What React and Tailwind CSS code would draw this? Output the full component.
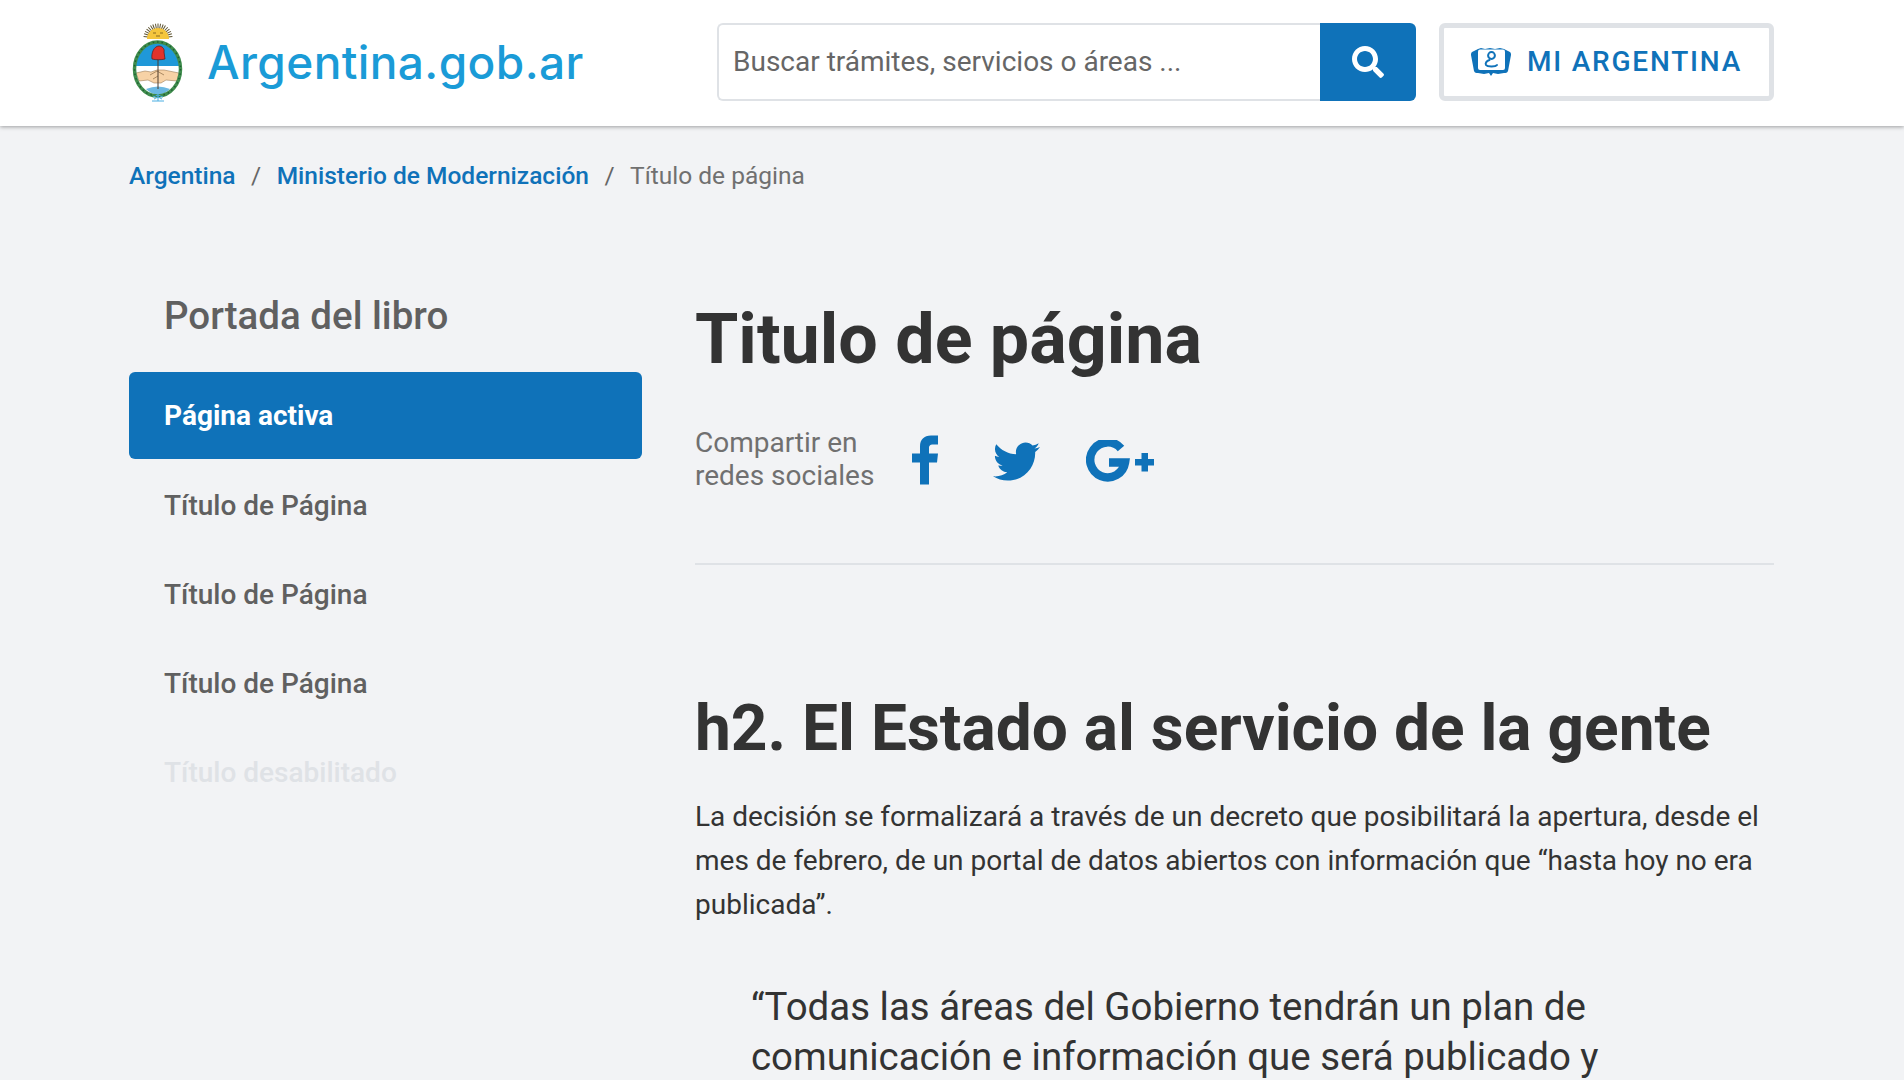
import { FaTwitter, FaSearch } from "react-icons/fa";

const sideLinks = ["Título de Página", "Título de Página", "Título de Página"];

// coordinates follow the crest's own box, roughly 52x80
function Escudo() {
  return (
    <svg viewBox="12 13 52 80" className="w-[52px] h-[80px] shrink-0">
      <g stroke="#5d5330" strokeWidth="1">
        {[-84, -63, -42, -21, 0, 21, 42, 63, 84, -73, -52, -31, -10, 10, 31, 52, 73].map((a) => (
          <line key={a} x1="38" y1="29" x2="38" y2="14.500" transform={`rotate(${a} 38 29)`} />
        ))}
      </g>
      <path d="M27 30a11 11 0 0 1 22 0z" fill="#f5c63c" />
      <path d="M33 24h3M40 24h3M36 27h4" stroke="#8a6a1e" strokeWidth="1" />
      <ellipse cx="37.500" cy="60" rx="22" ry="26" fill="#fff" />
      <path d="M15.500 57C16 43 25 34 37.500 34S59 43 59.500 57z" fill="#1f98d8" />
      <path d="M16 64l9-2 6 1 6-2 7 0 15 3-2 8-11-1-5 3h-7l-6-3-9 1z" fill="#f7d2a6" stroke="#8a6a45" strokeWidth="0.5" />
      <path d="M30 66l7-4 7 4M33 70l5-3" stroke="#8a6a45" strokeWidth="0.7" fill="none" />
      <path d="M26 80q12-5 24 0-5 5-12 6-7-1-12-6z" fill="#6bb8e2" />
      <line x1="38" y1="49" x2="38" y2="80" stroke="#4a3a2c" strokeWidth="1" />
      <path d="M32 50c-1-6 2-13 7-13 3 0 6 3 5 6l1 7c-4 1-9 1-13 0z" fill="#e2332a" stroke="#5b1a16" strokeWidth="0.7" />
      <ellipse cx="37.500" cy="60" rx="23" ry="27" fill="none" stroke="#3f8d4d" strokeWidth="3.500" />
      <ellipse cx="37.500" cy="60" rx="23" ry="27" fill="none" stroke="#1f5e33" strokeWidth="1.500" strokeDasharray="1.500 3" />
      <path d="M33 88l5-2 5 2M38 85v7M32 92h12M34 90l4-2 4 2" stroke="#4aaee2" strokeWidth="1" fill="none" />
    </svg>
  );
}

function MiArgentinaIcon() {
  return (
    <svg viewBox="0 0 41 30" className="w-[41px] h-[30px] shrink-0 mb-[2px]">
      <path d="M7 3L1 6c-1 1-1 2-1 3l3 16c1 2 2 2 4 2l6 1 5-1 2 3 2-3 5 1 6-1c2 0 3 0 4-2l3-16c0-1 0-2-1-3l-6-3-4-1-5 1-5-1-5 1-4-1z" fill="#0f72b9" />
      <rect x="7" y="3.500" width="27" height="20.500" rx="2" fill="#fff" />
      <circle cx="20.500" cy="9.500" r="3.400" fill="none" stroke="#0f72b9" strokeWidth="2" />
      <path d="M18.500 14c-3 1-4.500 3-3.500 5 1.500 2 9.500 2 11 0" fill="none" stroke="#0f72b9" strokeWidth="2" strokeLinecap="round" />
    </svg>
  );
}

function GooglePlusIcon() {
  return (
    <svg viewBox="0 0 68 44" className="w-[68px] h-[44px] shrink-0" fill="#0f72b9">
      <path d="M35 8.500A17.500 17.500 0 1 0 39 22.500H23" fill="none" stroke="#0f72b9" strokeWidth="8.500" />
      <rect x="49" y="19" width="19" height="6.500" />
      <rect x="55.500" y="13" width="6.500" height="18.500" />
    </svg>
  );
}

export default function App() {
  return (
    <div className="h-screen overflow-hidden bg-[#f2f3f5] text-[#333] font-['Roboto',sans-serif]">
      <header className="h-[126px] bg-white shadow-[0_1px_4px_rgba(0,0,0,0.35)] relative">
        <div className="ml-[129px] mr-[130px] h-full pb-[2px] flex items-center">
          <a className="flex items-center gap-[23px] pl-[3px] w-[588px]">
            <Escudo />
            <span className="font-['Inter',sans-serif] font-medium text-[46px] tracking-[0.4px] text-[#1a9bd7]">Argentina.gob.ar</span>
          </a>
          <form className="flex w-[699px] h-[78px]">
            <input
              className="flex-1 min-w-0 px-[14px] text-[28px] bg-white border-2 border-r-0 border-[#dfe2e6] rounded-l-md placeholder:text-[#666]"
              placeholder="Buscar trámites, servicios o áreas ..."
            />
            <button type="button" className="w-[96px] bg-[#0f72b9] rounded-r-md flex items-center justify-center text-white">
              <FaSearch className="w-[32px] h-[32px]" />
            </button>
          </form>
          <button type="button" className="ml-[23px] w-[335px] h-[78px] bg-white border-[5px] border-[#dfe2e6] rounded-md flex items-center justify-center gap-[15px] text-[#0f72b9] text-[28px] font-medium tracking-[1.8px]">
            <MiArgentinaIcon />
            MI ARGENTINA
          </button>
        </div>
      </header>

      <nav className="ml-[129px] mr-[130px] mt-[33px] flex items-center text-[24.500px] leading-[34px]">
        <a className="text-[#0f72b9] font-medium">Argentina</a>
        <span className="mx-[15.500px] text-[#666]">/</span>
        <a className="text-[#0f72b9] font-medium">Ministerio de Modernización</a>
        <span className="mx-[15.500px] text-[#666]">/</span>
        <span className="text-[#707070]">Título de página</span>
      </nav>

      <div className="ml-[129px] mr-[130px] mt-[72px] flex gap-[53px]">
        <aside className="w-[513px] shrink-0">
          <h3 className="pl-[35px] text-[38.500px] leading-[46px] mt-[28px] mb-[33px] font-medium text-[#606060]">Portada del libro</h3>
          <a className="flex items-center h-[87px] pl-[35px] bg-[#0f72b9] rounded-md text-white text-[28px] font-bold">Página activa</a>
          <div className="flex flex-col mt-[2px]">
            {sideLinks.map((label, i) => (
              <a key={i} className="flex items-center h-[89px] pl-[35px] text-[28px] font-medium text-[#606060]">{label}</a>
            ))}
            <a className="flex items-center h-[89px] pl-[35px] text-[28px] font-medium text-[#dfe2e6]">Título desabilitado</a>
          </div>
        </aside>

        <main className="flex-1 min-w-0">
          <h1 className="pt-[33px] text-[70px] leading-[82px] font-bold text-[#333]">Titulo de página</h1>
          <div className="mt-[46px] flex items-center pb-[71px] border-b-2 border-[#dfe2e6]">
            <p className="w-[217px] text-[28px] leading-[33px] text-[#707070]">Compartir en redes sociales</p>
            <div className="flex items-start text-[#0f72b9]">
              <svg viewBox="0 0 26 49" className="w-[26px] h-[50px] mt-[1px] mr-[55px]" fill="#0f72b9">
                <path d="M8 49V27H0v-9h8v-7C8 4 12 0 19 0h7v9h-5c-3 0-4 1-4 4v5h9l-1 9h-8v22z" />
              </svg>
              <FaTwitter className="w-[47px] h-[47px] mt-[4px] mr-[46px]" />
              <div className="mt-[6px]"><GooglePlusIcon /></div>
            </div>
          </div>
          <h2 className="mt-[129px] text-[64px] leading-[70px] font-bold text-[#333]">h2. El Estado al servicio de la gente</h2>
          <p className="mt-[31px] text-[28px] leading-[44px] text-[#333]">
            La decisión se formalizará a través de un decreto que posibilitará la apertura, desde el mes de febrero, de un portal de datos abiertos con información que “hasta hoy no era publicada”.
          </p>
          <blockquote className="mt-[55px] ml-[56px] text-[38.450px] leading-[50px] text-[#333]">
            “Todas las áreas del Gobierno tendrán un plan de comunicación e información que será publicado y
          </blockquote>
        </main>
      </div>
    </div>
  );
}
